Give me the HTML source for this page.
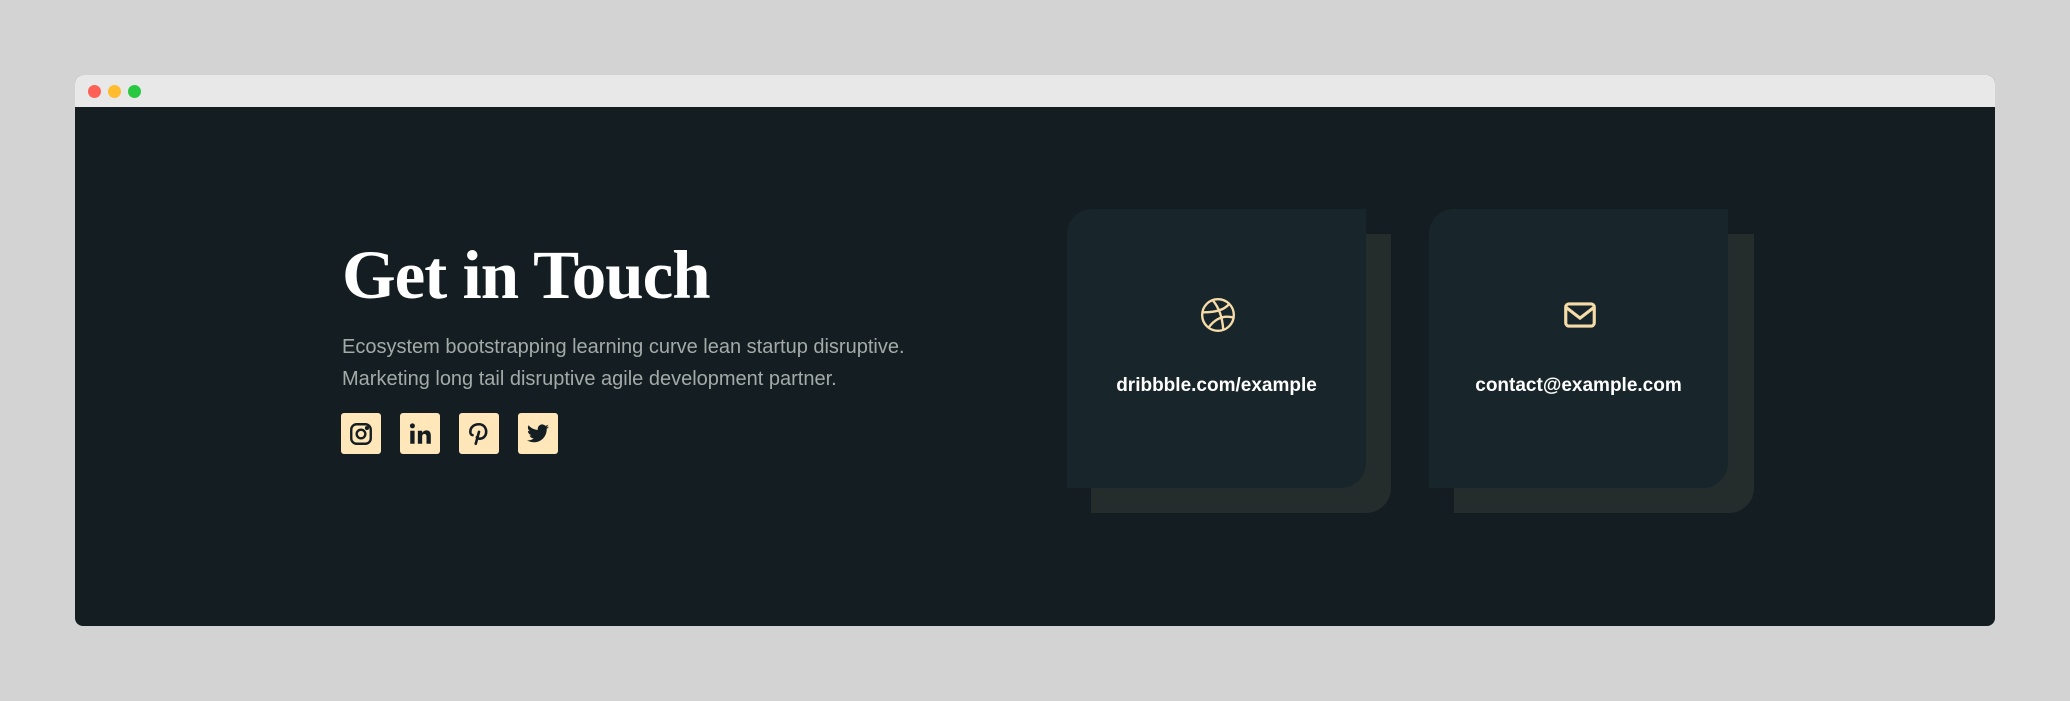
<!DOCTYPE html>
<html><head><style>
*{margin:0;padding:0;box-sizing:border-box}
body{width:2070px;height:701px;background:#d3d3d3;position:relative;overflow:hidden;font-family:"Liberation Sans",sans-serif}
.win{position:absolute;left:75px;top:75px;width:1920px;height:551px;border-radius:8px;overflow:hidden;background:#141e22}
.bar{height:32px;background:#e8e8e8;position:relative}
.dot{position:absolute;top:10px;width:13px;height:13px;border-radius:50%}
h1{position:absolute;left:342px;top:235px;font-family:"Liberation Serif",serif;font-weight:bold;font-size:69px;color:#fff;letter-spacing:-1px;line-height:80px}
p{position:absolute;left:342px;top:331px;font-size:20px;line-height:32px;color:#a3aaa8;letter-spacing:0px}
.soc{position:absolute;top:413px;width:40px;height:41px;background:#ffe7b9;border-radius:3px;display:flex;align-items:center;justify-content:center}
.card{position:absolute;top:209px;width:299px;height:279px;background:#18252a;border-radius:25px 0 25px 0}
.sh{position:absolute;top:234px;width:300px;height:279px;background:#242d2c;border-radius:0 0 25px 0}
.card svg{position:absolute;left:132px;top:87px}
.card div{position:absolute;left:0;right:0;text-align:center;color:#fff;font-weight:bold;font-size:19px}
</style></head><body>
<div class="win">
<div class="bar"><span class="dot" style="left:13px;background:#fe5f57"></span><span class="dot" style="left:33px;background:#febc2e"></span><span class="dot" style="left:53px;background:#28c840"></span></div>
</div>
<h1>Get in Touch</h1>
<p>Ecosystem bootstrapping learning curve lean startup disruptive.<br>Marketing long tail disruptive agile development partner.</p>
<div class="soc" style="left:341px"><svg width="26" height="26" viewBox="0 0 24 24" fill="none" stroke="#141e22" stroke-width="2.2"><rect x="3" y="3" width="18" height="18" rx="5"/><circle cx="12" cy="12" r="4"/><circle cx="17.5" cy="6.5" r="0.8" fill="#141e22"/></svg></div>
<div class="soc" style="left:400px"><svg width="26" height="26" viewBox="0 0 24 24" fill="#141e22"><rect x="3" y="9" width="4" height="12"/><circle cx="5" cy="4.5" r="2.3"/><path d="M10 9h4v2c.8-1.4 2.3-2.3 4-2.3 3 0 4 2 4 5V21h-4v-6.5c0-1.5-.5-2.5-2-2.5s-2 1.2-2 2.5V21h-4z"/></svg></div>
<div class="soc" style="left:459px"><svg width="26" height="28" viewBox="0 0 24 24" fill="none" stroke="#141e22" stroke-width="2.4" stroke-linecap="round"><path d="M9 21l3-11"/><path d="M10 15c1 2 6 2 8-2 2-5-1-10-6-10S4 6 4 10c0 2 1 3 2 3"/></svg></div>
<div class="soc" style="left:518px"><svg width="26" height="24" viewBox="0 0 24 24" fill="#141e22"><path d="M23 4.6a9 9 0 0 1-2.6.7 4.5 4.5 0 0 0 2-2.5 9 9 0 0 1-2.9 1.1A4.5 4.5 0 0 0 11.8 8 12.8 12.8 0 0 1 2.5 3.3a4.5 4.5 0 0 0 1.4 6 4.5 4.5 0 0 1-2-.6v.1a4.5 4.5 0 0 0 3.6 4.4 4.5 4.5 0 0 1-2 .1 4.5 4.5 0 0 0 4.2 3.1A9 9 0 0 1 1 18.3 12.8 12.8 0 0 0 7.9 20.3c8.3 0 12.8-6.9 12.8-12.8v-.6A9 9 0 0 0 23 4.6z"/></svg></div>
<div class="sh" style="left:1091px"></div>
<div class="card" style="left:1067px"><svg width="38" height="38" viewBox="0 0 24 24" fill="none" stroke="#f5dca8" stroke-width="1.5"><circle cx="12" cy="12" r="10"/><path d="M8.6 2.6c4.3 5 6.2 11 6.7 18.6"/><path d="M19.1 5c-3.3 3.8-8.3 5.4-16.9 5.3"/><path d="M21.8 13.6c-6-1.6-11.3.5-15.5 6"/></svg><div style="top:166px">dribbble.com/example</div></div>
<div class="sh" style="left:1454px"></div>
<div class="card" style="left:1429px"><svg width="38" height="38" viewBox="0 0 24 24" fill="none" stroke="#f5dca8" stroke-width="2"><rect x="3" y="5" width="18" height="14" rx="2"/><path d="M3 7l9 7 9-7"/></svg><div style="top:166px">contact@example.com</div></div>
</body></html>
